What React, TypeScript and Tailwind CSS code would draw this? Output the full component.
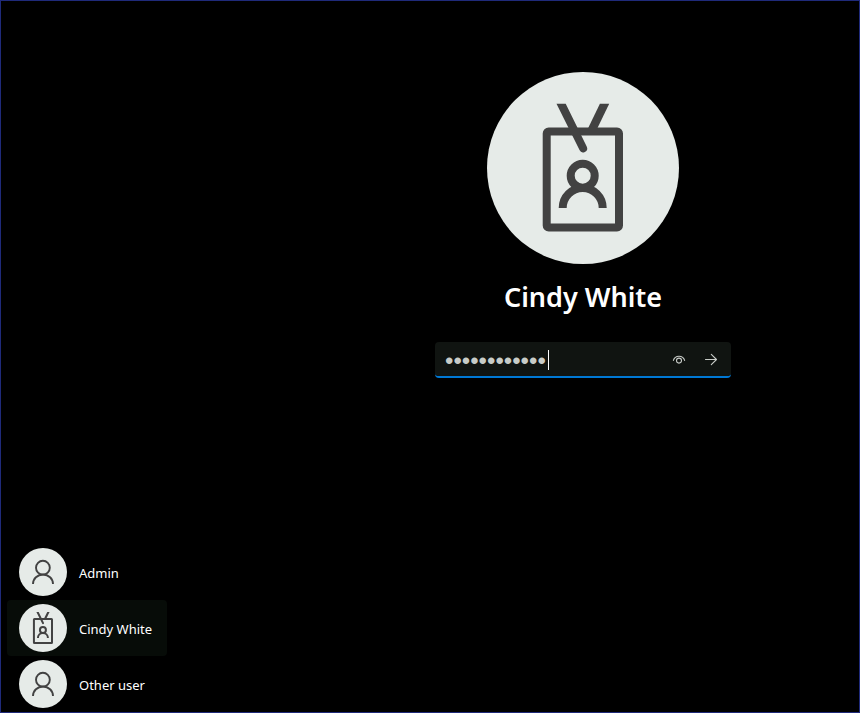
import { useState } from "react";

type User = { id: string; name: string; badge?: boolean };

const users: User[] = [
  { id: "admin", name: "Admin" },
  { id: "cindy", name: "Cindy White", badge: true },
  { id: "other", name: "Other user" },
];

function BadgeIcon({ className }: { className: string }) {
  return (
    <svg viewBox="0 0 192 192" className={className} fill="none" stroke="#424242" strokeWidth="8" aria-hidden="true">
      <rect x="59.700" y="59.500" width="72.300" height="96" rx="2" />
      <circle cx="95.700" cy="103.700" r="12" />
      <path d="M75.700 136a20 20 0 0 1 40 0" />
      <path stroke="none" fill="#424242" d="M69.500 31.700h9.200L99.700 74.500a4 4 0 0 1-7.200 3.600Z" />
      <path stroke="none" fill="#424242" d="M112.900 31.700h9.300L110 57h-9.300Z" />
    </svg>
  );
}

function PersonIcon({ className }: { className: string }) {
  return (
    <svg viewBox="0 0 48 48" className={className} fill="none" stroke="#424242" strokeWidth="1.900" aria-hidden="true">
      <circle cx="23.900" cy="19.700" r="6.900" />
      <path d="M14 36a10 9.500 0 0 1 20 0" />
    </svg>
  );
}

function UserRow({ user, selected, onSelect }: { user: User; selected: boolean; onSelect: () => void }) {
  return (
    <li>
      <button
        type="button"
        onClick={onSelect}
        className={`flex h-14 w-full items-center gap-3 rounded px-3 text-left text-[13px] leading-5 ${selected ? "bg-[#070c08]" : ""}`}
      >
        <span className="size-12 shrink-0 rounded-full bg-[#e6ebe8]">
          {user.badge ? <BadgeIcon className="size-12" /> : <PersonIcon className="size-12" />}
        </span>
        <span className="whitespace-nowrap pt-0.5">{user.name}</span>
      </button>
    </li>
  );
}

export default function App() {
  const [selected, setSelected] = useState("cindy");
  const [password, setPassword] = useState("abcdefghijkl");
  const [visible, setVisible] = useState(false);

  return (
    <div className="flex min-h-screen border border-[#1f2a7a] bg-black font-['Noto_Sans','Open_Sans',sans-serif] text-white">
      <aside className="flex w-[306px] shrink-0 flex-col justify-end pl-1.5">
        <ul className="w-40">
          {users.map((u) => (
            <UserRow key={u.id} user={u} selected={u.id === selected} onSelect={() => setSelected(u.id)} />
          ))}
        </ul>
      </aside>

      <main className="flex flex-1 flex-col items-center pt-[71px]">
        <div className="size-48 rounded-full bg-[#e6ebe8]">
          <BadgeIcon className="size-48" />
        </div>
        <h1 className="mt-3 text-[27px] leading-[42px] font-semibold">Cindy White</h1>

        <form
          onSubmit={(e) => e.preventDefault()}
          className="mt-6 flex h-9 w-[296px] items-center rounded border-b-2 border-[#0078d4] bg-[#101411] pt-0.5 pr-1 text-[#c8ccc8]"
        >
          <div className="relative min-w-0 flex-1">
            <input
              id="password"
              aria-label="Password"
              type={visible ? "text" : "password"}
              value={password}
              onChange={(e) => setPassword(e.target.value)}
              className="block h-8 w-full bg-transparent pt-0.5 pl-2.5 font-['Liberation_Sans',sans-serif] text-[24px] leading-[30px] caret-transparent outline-none"
            />
            <span className="absolute top-1.5 left-[113px] h-5 w-px bg-white" />
          </div>
          <button type="button" aria-label="Show password" onClick={() => setVisible(!visible)} className="flex h-8 w-8 items-center justify-center">
            <svg viewBox="0 0 16 16" className="size-4" fill="none" stroke="currentColor" strokeWidth="1.100" strokeLinecap="round" aria-hidden="true">
              <path d="M2.400 8.400C3.100 5.900 5.300 4.200 8 4.200s4.900 1.700 5.600 4.200" />
              <circle cx="8" cy="8.600" r="2.500" />
            </svg>
          </button>
          <button type="submit" aria-label="Submit" className="flex h-8 w-8 items-center justify-center">
            <svg viewBox="0 0 16 16" className="size-4" fill="none" stroke="currentColor" strokeWidth="1.100" strokeLinecap="round" strokeLinejoin="round" aria-hidden="true">
              <path d="M2.500 7.500H13.500M8.300 2.300 13.500 7.500l-5.200 5.200" />
            </svg>
          </button>
        </form>
      </main>
    </div>
  );
}
